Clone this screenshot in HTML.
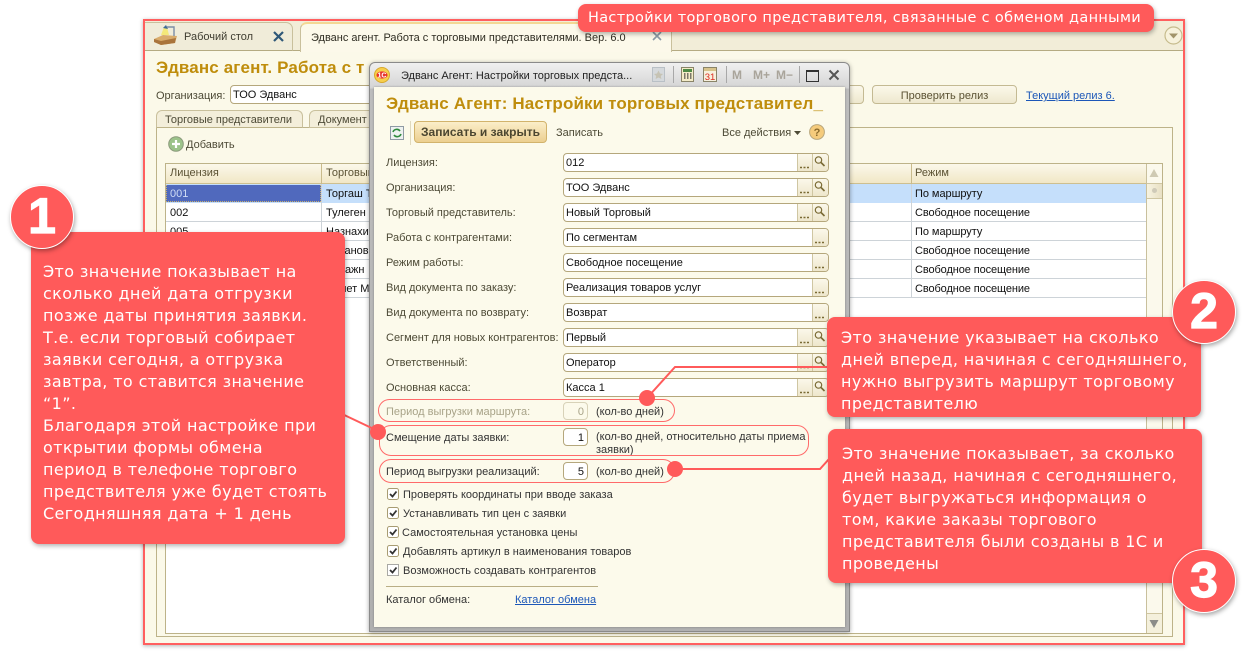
<!DOCTYPE html>
<html><head><meta charset="utf-8">
<style>
html,body{margin:0;padding:0;background:#fff}
#p{position:relative;width:1246px;height:658px;overflow:hidden;background:#fff;font:11px "Liberation Sans",sans-serif;color:#222}
#p div,#p span.a,#p svg{position:absolute}
.t{white-space:nowrap;line-height:16px;height:16px}
.inp{background:#fff;border:1px solid #b5a77c;border-radius:4px;box-sizing:border-box;height:19px;line-height:19px;padding-left:2px;white-space:nowrap;color:#111;font-size:11px}
.btn{border-left:1px solid #cfc6a2;background:linear-gradient(#fbf8ea,#eee7cc);box-sizing:border-box}
.lbl{left:386px;color:#4d4a36}
.row{left:166px;width:980px;height:19px;border-bottom:1px solid #cdd3d8;box-sizing:border-box}
.cell{white-space:nowrap;line-height:20px;height:18px;color:#111}
.call{background:#ff5a5a;border-radius:8px;box-shadow:1px 2px 5px rgba(0,0,0,.3)}
.ct{color:#fff;font:16px/24px "DejaVu Sans",sans-serif;height:22px;white-space:nowrap;letter-spacing:.38px}
.num{width:64px;height:64px;border-radius:50%;background:#ff5a5a;border:1px solid #fff;box-sizing:border-box;box-shadow:1px 2px 5px rgba(0,0,0,.35);color:#fff;font:bold 50px/60px "Liberation Sans",sans-serif;text-align:center;-webkit-text-stroke:1.2px #fff}
.oval{border:1px solid #ff6a6a;border-radius:12px;box-sizing:border-box}
.dot{width:16px;height:16px;border-radius:50%;background:#ff5a5a}
</style></head><body><div id="p">

<!-- main frame -->
<div style="left:143px;top:19px;width:1042px;height:626px;box-sizing:border-box;border:2px solid #ff5f5f;background:#fbf9e9;box-shadow:0 1px 4px rgba(0,0,0,.3)"></div>
<div style="left:145px;top:21px;width:1038px;height:30px;background:#f2edd8;border-bottom:1px solid #b5ab82;box-sizing:border-box"></div>
<div style="left:145px;top:22px;width:148px;height:29px;background:#f0ecd9;border:1px solid #c9c09c;border-bottom:1px solid #b5ab82;border-left:0;border-radius:0 7px 0 0;box-sizing:border-box"></div>
<svg style="left:153px;top:24px" width="26" height="22" viewBox="0 0 26 22"><path d="M1 15 L10 11 L24 12 L22 19 L8 21 L1 18Z" fill="#d9ac6c"/><path d="M1 15 L8 17 L23 14 L22 19 L8 21 L1 18Z" fill="#a9743c"/><path d="M8 11 L11 3 L14 3 L16 11Z" fill="#f4e97a"/><path d="M10 4 L13 1 L15 5" fill="#3f6b98"/><path d="M14 3 H21 V12" fill="none" stroke="#7b8da6" stroke-width="1.4"/></svg>
<div class="t" style="left:184px;top:29px;color:#3f3d30">Рабочий стол</div>
<svg style="left:273px;top:31px" width="11" height="11" viewBox="0 0 11 11"><path d="M1 1 L10 10 M10 1 L1 10" stroke="#2f5878" stroke-width="2.2"/></svg>
<div style="left:300px;top:22px;width:372px;height:30px;background:#fcf9ea;border:1px solid #c9c09c;border-top:2px solid #f3d894;border-bottom:0;border-radius:7px 7px 0 0;box-sizing:border-box"></div>
<div class="t" style="left:311px;top:30px;color:#2f2d22">Эдванс агент. Работа с торговыми представителями. Вер. 6.0</div>
<svg style="left:652px;top:31px" width="10" height="10" viewBox="0 0 10 10"><path d="M1 1 L9 9 M9 1 L1 9" stroke="#8a9aa6" stroke-width="1.6"/></svg>
<svg style="left:1164px;top:26px" width="19" height="19" viewBox="0 0 19 19"><circle cx="9.5" cy="9.5" r="8.5" fill="#f7f2dc" stroke="#c6bb8c" stroke-width="1.2"/><path d="M5 7.5 H14 L9.5 12.5Z" fill="#a2946a"/></svg>

<div class="t" style="left:156px;top:58px;height:20px;line-height:20px;font-size:17px;font-weight:bold;color:#bf8d0c;letter-spacing:.13px">Эдванс агент. Работа с т</div>
<div class="t" style="left:156px;top:88px;color:#4d4a36">Организация:</div>
<div class="inp" style="left:230px;top:85px;width:145px;height:19px">ТОО Эдванс</div>
<div style="left:840px;top:85px;width:24px;height:19px;box-sizing:border-box;border:1px solid #c4ba93;border-radius:4px;background:linear-gradient(#fbf8ea,#eee8ce)"></div>
<div style="left:872px;top:85px;width:145px;height:19px;box-sizing:border-box;border:1px solid #c4ba93;border-radius:4px;background:linear-gradient(#fbf8ea,#eee8ce);text-align:center;line-height:20px;color:#5b5233">Проверить релиз</div>
<div class="t" style="left:1026px;top:88px;color:#1c57b8;text-decoration:underline">Текущий релиз 6.</div>

<!-- inner tabs + panel -->
<div style="left:156px;top:127px;width:1017px;height:510px;border:1px solid #bdb389;box-sizing:border-box"></div>
<div style="left:156px;top:110px;width:147px;height:18px;background:#f3eeda;border:1px solid #c9c09c;border-bottom:1px solid #bdb389;border-radius:6px 6px 0 0;box-sizing:border-box"></div>
<div class="t" style="left:165px;top:112px;color:#4d4a36">Торговые представители</div>
<div style="left:309px;top:110px;width:70px;height:18px;background:#f3eeda;border:1px solid #c9c09c;border-radius:6px 6px 0 0;box-sizing:border-box"></div>
<div class="t" style="left:318px;top:112px;color:#4d4a36">Документ</div>
<svg style="left:168px;top:136px" width="16" height="16" viewBox="0 0 16 16"><circle cx="8" cy="8" r="7.3" fill="#9cc38a" stroke="#8b9a7c"/><path d="M8 4 V12 M4 8 H12" stroke="#fff" stroke-width="2.2"/></svg>
<div class="t" style="left:186px;top:137px;color:#4d4a36">Добавить</div>

<!-- table -->
<div style="left:165px;top:163px;width:998px;height:471px;background:#fff;border:1px solid #bdb389;box-sizing:border-box"></div>
<div style="left:166px;top:164px;width:980px;height:20px;background:linear-gradient(#fbf8ea,#f1e7c6);border-bottom:1px solid #cdbf90;box-sizing:border-box"></div>
<div style="left:1146px;top:164px;width:16px;height:469px;background:#fbf9ec;border-left:1px solid #c9c09c;box-sizing:border-box"></div>
<svg style="left:1148px;top:167px" width="12" height="12" viewBox="0 0 12 12"><path d="M1.5 10 H10.5 L6 2Z" fill="#cfcab3"/></svg>
<div style="left:1147px;top:183px;width:15px;height:16px;background:linear-gradient(90deg,#f7f3e0,#e8e0c4);border-top:1px solid #cfc6a2;border-bottom:1px solid #cfc6a2;box-sizing:border-box"></div>
<div style="left:1152px;top:188px;width:5px;height:5px;border-radius:50%;background:#cfcab8"></div>
<div style="left:1147px;top:613px;width:15px;height:20px;background:#f4f0dc;border-top:1px solid #cfc6a2;box-sizing:border-box"></div>
<svg style="left:1148px;top:618px" width="12" height="12" viewBox="0 0 12 12"><path d="M1.5 2 H10.5 L6 10Z" fill="#8b8c88"/></svg>
<div class="t" style="left:170px;top:165px;color:#5b5233">Лицензия</div>
<div class="t" style="left:326px;top:165px;color:#5b5233">Торговый</div>
<div class="t" style="left:915px;top:165px;color:#5b5233">Режим</div>
<div style="left:166px;top:184px;width:980px;height:19px;background:#c5dffb"></div>
<div style="left:166px;top:184px;width:155px;height:18px;background:#5069bd;outline:1px dotted #c8b070;outline-offset:-1px"></div>
<div class="row" style="top:203px"></div><div class="row" style="top:222px"></div><div class="row" style="top:241px"></div><div class="row" style="top:260px"></div><div class="row" style="top:279px"></div>
<div style="left:166px;top:184px;width:980px;height:1px;background:#c5dffb"></div>
<div style="left:321px;top:164px;width:1px;height:134px;background:#cdd3d8"></div>
<div style="left:911px;top:164px;width:1px;height:134px;background:#cdd3d8"></div>
<div style="left:321px;top:164px;width:1px;height:20px;background:#c9bb8c"></div>
<div style="left:911px;top:164px;width:1px;height:20px;background:#c9bb8c"></div>
<div class="cell" style="left:170px;top:184px;color:#cfdcf5">001</div>
<div class="cell" style="left:170px;top:203px">002</div>
<div class="cell" style="left:170px;top:222px">005</div>
<div class="cell" style="left:326px;top:184px">Торгаш Т</div>
<div class="cell" style="left:326px;top:203px">Тулеген</div>
<div class="cell" style="left:326px;top:222px">Назнахин</div>
<div class="cell" style="left:326px;top:241px">Исканов</div>
<div class="cell" style="left:326px;top:260px">Кадажн</div>
<div class="cell" style="left:326px;top:279px">Ахмет Ма</div>
<div class="cell" style="left:915px;top:184px;letter-spacing:-.05px">По маршруту</div>
<div class="cell" style="left:915px;top:203px;letter-spacing:-.1px">Свободное посещение</div>
<div class="cell" style="left:915px;top:222px;letter-spacing:-.05px">По маршруту</div>
<div class="cell" style="left:915px;top:241px;letter-spacing:-.1px">Свободное посещение</div>
<div class="cell" style="left:915px;top:260px;letter-spacing:-.1px">Свободное посещение</div>
<div class="cell" style="left:915px;top:279px;letter-spacing:-.1px">Свободное посещение</div>

<!-- dialog -->
<div style="left:369px;top:62px;width:481px;height:570px;box-sizing:border-box;background:linear-gradient(#f0f0f0 0,#d4d4d4 25px,#bdbdbd 26px,#b0b0b0 100%);border:1px solid #8a8a8a;border-radius:6px 6px 0 0;box-shadow:0 1px 5px rgba(0,0,0,.35)"></div>
<div style="left:374px;top:87px;width:471px;height:540px;background:#fcfaeb;box-shadow:0 0 2px rgba(0,0,0,.3)"></div>
<svg style="left:374px;top:67px" width="16" height="16" viewBox="0 0 16 16"><circle cx="8" cy="8" r="7.5" fill="#f7cf4d" stroke="#d8a92e"/><ellipse cx="8" cy="8" rx="5.6" ry="3.6" fill="#e8352d"/><text x="8" y="10.4" text-anchor="middle" font-family="Liberation Sans" font-weight="bold" font-size="7" fill="#fff">1С</text></svg>
<div class="t" style="left:401px;top:68px;color:#222">Эдванс Агент: Настройки торговых предста...</div>
<svg style="left:652px;top:67px" width="14" height="16" viewBox="0 0 14 16"><rect x=".5" y=".5" width="12" height="14" fill="#d5d9dc" stroke="#b9c0c6"/><path d="M6.5 3.5 L8 6.5 L11 7 L8.8 9 L9.4 12 L6.5 10.5 L3.6 12 L4.2 9 L2 7 L5 6.5Z" fill="#c6c3b4"/></svg>
<div style="left:673px;top:66px;width:1px;height:17px;background:#a8a8a8"></div>
<svg style="left:681px;top:67px" width="13" height="15" viewBox="0 0 13 15"><rect x=".5" y=".5" width="12" height="14" fill="#f4ecc8" stroke="#8a8468"/><rect x="2" y="2" width="9" height="3" fill="#4f8a45"/><path d="M3 7h1.5M6 7h1.5M9 7h1.5M3 9h1.5M6 9h1.5M9 9h1.5M3 11h1.5M6 11h1.5M9 11h1.5" stroke="#333" stroke-width="1.2"/></svg>
<svg style="left:703px;top:67px" width="14" height="15" viewBox="0 0 14 15"><rect x=".5" y=".5" width="13" height="14" fill="#f7f1de" stroke="#8a8468"/><rect x="1" y="1" width="12" height="3" fill="#d8c48c"/><text x="7" y="13" text-anchor="middle" font-family="Liberation Sans" font-size="9.5" fill="#dd2a1f">31</text></svg>
<div style="left:726px;top:66px;width:1px;height:17px;background:#a8a8a8"></div>
<div class="t" style="left:732px;top:67px;font-size:12px;font-weight:bold;color:#a9a49a">M</div>
<div class="t" style="left:753px;top:67px;font-size:12px;font-weight:bold;color:#a9a49a">M+</div>
<div class="t" style="left:776px;top:67px;font-size:12px;font-weight:bold;color:#a9a49a">M−</div>
<div style="left:799px;top:66px;width:1px;height:17px;background:#a8a8a8"></div>
<div style="left:806px;top:70px;width:11px;height:9px;border:1px solid #333;border-top:2px solid #333"></div>
<svg style="left:828px;top:69px" width="12" height="12" viewBox="0 0 12 12"><path d="M1.5 1.5 L10.5 10.5 M10.5 1.5 L1.5 10.5" stroke="#555" stroke-width="2"/></svg>

<div class="t" style="left:386px;top:94px;height:20px;line-height:20px;font-size:17px;font-weight:bold;color:#bf8d0c;letter-spacing:.13px">Эдванс Агент: Настройки торговых представител_</div>
<svg style="left:390px;top:126px" width="14" height="14" viewBox="0 0 14 14"><rect x=".5" y=".5" width="13" height="13" fill="#eef2f0" stroke="#8f9aa4"/><path d="M3 6 A4 4 0 0 1 10 5 M11 8 A4 4 0 0 1 4 9" fill="none" stroke="#2e8a3c" stroke-width="1.6"/></svg>
<div style="left:410px;top:121px;width:1px;height:24px;background:#e0d9bd"></div>
<div style="left:414px;top:121px;width:133px;height:22px;box-sizing:border-box;border:1px solid #d2b36c;border-radius:4px;background:linear-gradient(#fbeec9,#eccf90);text-align:center;font-weight:bold;line-height:21px;font-size:12px;color:#4b4630">Записать и закрыть</div>
<div class="t" style="left:556px;top:125px;color:#4d4a36">Записать</div>
<div class="t" style="left:722px;top:125px;color:#4d4a36">Все действия</div>
<svg style="left:794px;top:131px" width="7" height="5" viewBox="0 0 7 5"><path d="M0 0 H7 L3.5 4Z" fill="#4d4a36"/></svg>
<svg style="left:809px;top:124px" width="16" height="16" viewBox="0 0 16 16"><circle cx="8" cy="8" r="7.4" fill="#f5cb7c" stroke="#b9a77c"/><text x="8" y="12" text-anchor="middle" font-family="Liberation Sans" font-weight="bold" font-size="11" fill="#8a6a2c">?</text></svg>

<!-- form rows -->
<div class="t lbl" style="top:155px">Лицензия:</div>
<div class="t lbl" style="top:180px">Организация:</div>
<div class="t lbl" style="top:205px">Торговый представитель:</div>
<div class="t lbl" style="top:230px">Работа с контрагентами:</div>
<div class="t lbl" style="top:255px">Режим работы:</div>
<div class="t lbl" style="top:280px">Вид документа по заказу:</div>
<div class="t lbl" style="top:305px">Вид документа по возврату:</div>
<div class="t lbl" style="top:330px">Сегмент для новых контрагентов:</div>
<div class="t lbl" style="top:355px">Ответственный:</div>
<div class="t lbl" style="top:380px">Основная касса:</div>

<div class="inp" style="left:563px;top:153px;width:266px">012</div>
<div class="inp" style="left:563px;top:178px;width:266px">ТОО Эдванс</div>
<div class="inp" style="left:563px;top:203px;width:266px">Новый Торговый</div>
<div class="inp" style="left:563px;top:228px;width:266px">По сегментам</div>
<div class="inp" style="left:563px;top:253px;width:266px">Свободное посещение</div>
<div class="inp" style="left:563px;top:278px;width:266px">Реализация товаров услуг</div>
<div class="inp" style="left:563px;top:303px;width:266px">Возврат</div>
<div class="inp" style="left:563px;top:328px;width:266px">Первый</div>
<div class="inp" style="left:563px;top:353px;width:266px">Оператор</div>
<div class="inp" style="left:563px;top:378px;width:266px">Касса 1</div>

<!-- dots buttons -->
<div class="btn" style="left:797px;top:154px;width:16px;height:17px"></div><div class="btn" style="left:812px;top:154px;width:16px;height:17px;border-radius:0 3px 3px 0"></div>
<div class="btn" style="left:797px;top:179px;width:16px;height:17px"></div><div class="btn" style="left:812px;top:179px;width:16px;height:17px;border-radius:0 3px 3px 0"></div>
<div class="btn" style="left:797px;top:204px;width:16px;height:17px"></div><div class="btn" style="left:812px;top:204px;width:16px;height:17px;border-radius:0 3px 3px 0"></div>
<div class="btn" style="left:812px;top:229px;width:16px;height:17px;border-radius:0 3px 3px 0"></div>
<div class="btn" style="left:812px;top:254px;width:16px;height:17px;border-radius:0 3px 3px 0"></div>
<div class="btn" style="left:812px;top:279px;width:16px;height:17px;border-radius:0 3px 3px 0"></div>
<div class="btn" style="left:812px;top:304px;width:16px;height:17px;border-radius:0 3px 3px 0"></div>
<div class="btn" style="left:797px;top:329px;width:16px;height:17px"></div><div class="btn" style="left:812px;top:329px;width:16px;height:17px;border-radius:0 3px 3px 0"></div>
<div class="btn" style="left:797px;top:354px;width:16px;height:17px"></div><div class="btn" style="left:812px;top:354px;width:16px;height:17px;border-radius:0 3px 3px 0"></div>
<div class="btn" style="left:797px;top:379px;width:16px;height:17px"></div><div class="btn" style="left:812px;top:379px;width:16px;height:17px;border-radius:0 3px 3px 0"></div>
<svg style="left:795px;top:151px" width="35" height="250" viewBox="0 0 35 250" fill="none">
<defs><g id="d"><path d="M5 16.5h2M8.5 16.5h2M12 16.5h2" stroke="#7a6a34" stroke-width="1.6"/></g><g id="m"><circle cx="23.5" cy="9" r="3.2" stroke="#7a6a34" stroke-width="1.2"/><path d="M26 11.5 L29.5 15" stroke="#7a6a34" stroke-width="1.6"/></g><g id="e"><path d="M20 16.5h2M23.5 16.5h2M27 16.5h2" stroke="#7a6a34" stroke-width="1.6"/></g></defs>
<use href="#d"/><use href="#m"/>
<use href="#d" y="25"/><use href="#m" y="25"/>
<use href="#d" y="50"/><use href="#m" y="50"/>
<use href="#e" y="75"/><use href="#e" y="100"/><use href="#e" y="125"/><use href="#e" y="150"/>
<use href="#d" y="175"/><use href="#m" y="175"/>
<use href="#d" y="200"/><use href="#m" y="200"/>
<use href="#d" y="225"/><use href="#m" y="225"/>
</svg>

<!-- numeric rows -->
<div class="t" style="left:386px;top:404px;color:#a8a388">Период выгрузки маршрута:</div>
<div class="inp" style="left:563px;top:402px;width:25px;height:18px;line-height:18px;text-align:right;padding-right:3px;color:#a8a388;border-color:#d8d2b8;background:#fcfaeb">0</div>
<div class="t" style="left:596px;top:404px;color:#333">(кол-во дней)</div>
<div class="t" style="left:386px;top:430px;color:#333">Смещение даты заявки:</div>
<div class="inp" style="left:563px;top:428px;width:25px;height:18px;line-height:18px;text-align:right;padding-right:3px">1</div>
<div class="t" style="left:596px;top:429px;color:#333">(кол-во дней, относительно даты приема</div>
<div class="t" style="left:596px;top:442px;color:#333">заявки)</div>
<div class="t" style="left:386px;top:464px;color:#333">Период выгрузки реализаций:</div>
<div class="inp" style="left:563px;top:462px;width:25px;height:18px;line-height:18px;text-align:right;padding-right:3px">5</div>
<div class="t" style="left:596px;top:464px;color:#333">(кол-во дней)</div>

<div class="oval" style="left:378px;top:399px;width:297px;height:23px"></div>
<div class="oval" style="left:379px;top:425px;width:430px;height:31px"></div>
<div class="oval" style="left:379px;top:459px;width:296px;height:24px"></div>

<!-- checkboxes -->
<svg style="left:386px;top:487px" width="15" height="90" viewBox="0 0 15 90" fill="none">
<defs><g id="c"><rect x="1.5" y=".5" width="11" height="11" rx="2" fill="#fff" stroke="#a89c72"/><path d="M4 6 L6.5 8.5 L10.5 3.5" stroke="#333" stroke-width="1.8"/></g></defs>
<use href="#c" y="1"/><use href="#c" y="20"/><use href="#c" y="39"/><use href="#c" y="58"/>
<rect x="1.5" y="77.5" width="11" height="11" fill="#fff" stroke="#555" stroke-dasharray="1 1"/><path d="M4 83 L6.5 85.5 L10.5 80.5" stroke="#333" stroke-width="1.8"/>
</svg>
<div class="t" style="left:403px;top:487px;color:#333;letter-spacing:.02px">Проверять координаты при вводе заказа</div>
<div class="t" style="left:403px;top:506px;color:#333;letter-spacing:.02px">Устанавливать тип цен с заявки</div>
<div class="t" style="left:402px;top:525px;color:#333;letter-spacing:.02px">Самостоятельная установка цены</div>
<div class="t" style="left:403px;top:544px;color:#333;letter-spacing:.02px">Добавлять артикул в наименования товаров</div>
<div class="t" style="left:403px;top:563px;color:#333;letter-spacing:.02px">Возможность создавать контрагентов</div>
<div style="left:386px;top:586px;width:212px;height:1px;background:#b9ae85"></div>
<div class="t" style="left:386px;top:592px;color:#333">Каталог обмена:</div>
<div class="t" style="left:515px;top:592px;color:#1c57b8;text-decoration:underline">Каталог обмена</div>

<!-- leader lines -->
<svg style="left:0;top:0" width="1246" height="658" fill="none"><path d="M647 398 L675 367 H830" stroke="#ff5a5a" stroke-width="2"/><path d="M378 431 L340 413" stroke="#ff5a5a" stroke-width="2"/><path d="M675 469 H820 L829 459" stroke="#ff5a5a" stroke-width="2"/></svg>
<div class="dot" style="left:639px;top:390px"></div>
<div class="dot" style="left:370px;top:424px"></div>
<div class="dot" style="left:667px;top:461px"></div>

<!-- top callout -->
<div class="call" style="left:578px;top:4px;width:576px;height:28px"></div>
<div class="ct" style="left:588px;top:6px;font-size:14.5px;letter-spacing:.32px">Настройки торгового представителя, связанные с обменом данными</div>

<!-- callout 1 -->
<div class="call" style="left:31px;top:232px;width:314px;height:312px"></div>
<div class="num" style="left:10px;top:185px">1</div>
<div class="ct" style="left:43px;top:260px">Это значение показывает на</div>
<div class="ct" style="left:43px;top:282px">сколько дней дата отгрузки</div>
<div class="ct" style="left:43px;top:304px">позже даты принятия заявки.</div>
<div class="ct" style="left:43px;top:326px">Т.е. если торговый собирает</div>
<div class="ct" style="left:43px;top:348px">заявки сегодня, а отгрузка</div>
<div class="ct" style="left:43px;top:370px">завтра, то ставится значение</div>
<div class="ct" style="left:43px;top:392px">“1”.</div>
<div class="ct" style="left:43px;top:414px">Благодаря этой настройке при</div>
<div class="ct" style="left:43px;top:436px">открытии формы обмена</div>
<div class="ct" style="left:43px;top:458px">период в телефоне торговго</div>
<div class="ct" style="left:43px;top:480px">предствителя уже будет стоять</div>
<div class="ct" style="left:43px;top:502px">Сегодняшняя дата + 1 день</div>

<!-- callout 2 -->
<div class="call" style="left:827px;top:317px;width:374px;height:100px"></div>
<div class="num" style="left:1172px;top:280px">2</div>
<div class="ct" style="left:841px;top:326px">Это значение указывает на сколько</div>
<div class="ct" style="left:841px;top:348px">дней вперед, начиная с сегодняшнего,</div>
<div class="ct" style="left:841px;top:370px">нужно выгрузить маршрут торговому</div>
<div class="ct" style="left:841px;top:392px">представителю</div>

<!-- callout 3 -->
<div class="call" style="left:828px;top:429px;width:374px;height:154px"></div>
<div class="num" style="left:1172px;top:549px">3</div>
<div class="ct" style="left:842px;top:442px">Это значение показывает, за сколько</div>
<div class="ct" style="left:842px;top:464px">дней назад, начиная с сегодняшнего,</div>
<div class="ct" style="left:842px;top:486px">будет выгружаться информация о</div>
<div class="ct" style="left:842px;top:508px">том, какие заказы торгового</div>
<div class="ct" style="left:842px;top:530px">представителя были созданы в 1С и</div>
<div class="ct" style="left:842px;top:552px">проведены</div>

</div></body></html>
